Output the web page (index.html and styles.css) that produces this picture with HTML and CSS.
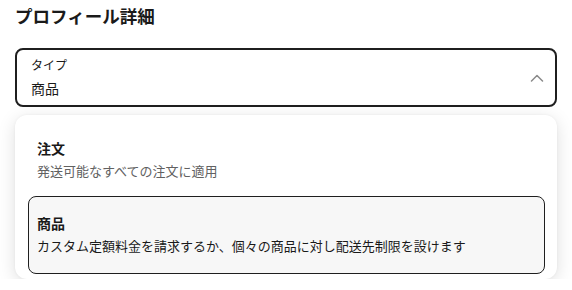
FILE: index.html
```html
<!DOCTYPE html>
<html lang="ja">
<head>
    <meta charset="UTF-8">
    <meta name="viewport" content="width=device-width, initial-scale=1.0">
    <title>プロフィール詳細</title>
    <link rel="stylesheet" href="styles.css">
</head>
<body>
    <h1 class="page-title">プロフィール詳細</h1>

    <div class="select">
        <div class="select-text">
            <span class="select-label">タイプ</span>
            <span class="select-value">商品</span>
        </div>
        <svg class="chevron" width="14" height="8" viewBox="0 0 14 8">
            <path d="M1.5 7 L7 1.5 L12.5 7" fill="none" stroke="#8a8a8a" stroke-width="1.5" stroke-linecap="round" stroke-linejoin="round"/>
        </svg>
    </div>

    <ul class="options">
        <li class="option first">
            <span class="option-title">注文</span>
            <span class="option-desc">発送可能なすべての注文に適用</span>
        </li>
        <li class="option selected">
            <span class="option-title">商品</span>
            <span class="option-desc">カスタム定額料金を請求するか、個々の商品に対し配送先制限を設けます</span>
        </li>
    </ul>
</body>
</html>
```

FILE: styles.css
```css
:root {
    --text: #1a1a1a;
    --muted: #616161;
    --border: #1f1f1f;
    --selected: #f7f7f7;
}

* {
    margin: 0;
    padding: 0;
    box-sizing: border-box;
}

body {
    font-family: Inter, "Noto Sans CJK JP", sans-serif;
    color: var(--text);
    background: #ffffff;
    padding: 5px 15px 0;
}

.page-title {
    font-size: 17.5px;
    line-height: 24px;
    font-weight: 700;
    margin-bottom: 19px;
}

.select {
    display: flex;
    align-items: center;
    justify-content: space-between;
    height: 59px;
    border: 2px solid var(--border);
    border-radius: 8px;
    padding: 7px 11px 6px 14px;
}

.select-text {
    display: flex;
    flex-direction: column;
    gap: 5px;
}

.select-label {
    font-size: 12px;
    line-height: 16px;
}

.select-value {
    font-size: 14px;
    line-height: 20px;
}

.options {
    list-style: none;
    margin-top: 8px;
    background: #ffffff;
    border-radius: 12px;
    box-shadow: 0 4px 18px rgba(0, 0, 0, 0.13), 0 0 3px rgba(0, 0, 0, 0.05);
    padding: 6px 12px 5px 13px;
    display: flex;
    flex-direction: column;
    gap: 1px;
}

.option {
    display: flex;
    flex-direction: column;
    border: 1px solid transparent;
    border-radius: 8px;
    padding: 18px 8px;
}

.option.first {
    padding-bottom: 14px;
}

.option-title {
    font-size: 14px;
    line-height: 18px;
    font-weight: 700;
}

.option-desc {
    font-size: 13px;
    line-height: 18px;
    margin-top: 4px;
}

.option.first .option-desc {
    color: var(--muted);
}

.option.selected {
    background: var(--selected);
    border-color: var(--border);
}
```
